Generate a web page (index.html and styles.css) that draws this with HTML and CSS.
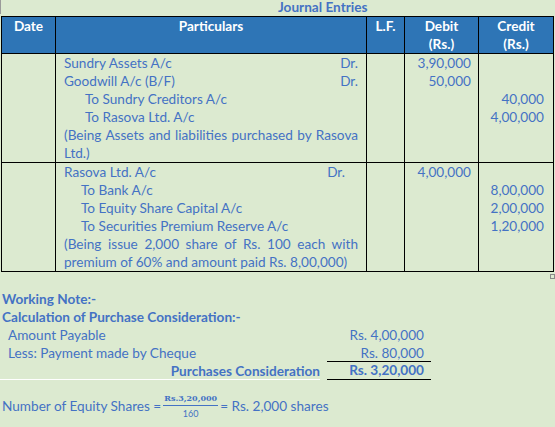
FILE: index.html
```html
<!DOCTYPE html>
<html>
<head>
<meta charset="utf-8">
<link rel="stylesheet" href="styles.css">
</head>
<body>
<div class="page">
  <div class="title-row"><span class="title">Journal Entries</span></div>
  <table class="journal">
    <colgroup>
      <col class="c-date"><col class="c-part"><col class="c-lf"><col class="c-dr"><col class="c-cr">
    </colgroup>
    <thead>
      <tr>
        <th>Date</th>
        <th>Particulars</th>
        <th>L.F.</th>
        <th>Debit<br>(Rs.)</th>
        <th>Credit<br>(Rs.)</th>
      </tr>
    </thead>
    <tbody>
      <tr>
        <td></td>
        <td class="part">
          <div class="ln dr"><span>Sundry Assets A/c</span><span>Dr.</span></div>
          <div class="ln dr"><span>Goodwill A/c (B/F)</span><span>Dr.</span></div>
          <div class="ln to1">To Sundry Creditors A/c</div>
          <div class="ln to1">To Rasova Ltd. A/c</div>
          <div class="ln just">(Being Assets and liabilities purchased by Rasova</div>
          <div class="ln">Ltd.)</div>
        </td>
        <td></td>
        <td class="amt">
          <div class="ln">3,90,000</div>
          <div class="ln">50,000</div>
        </td>
        <td class="amt cr">
          <div class="ln">&nbsp;</div>
          <div class="ln">&nbsp;</div>
          <div class="ln">40,000</div>
          <div class="ln">4,00,000</div>
        </td>
      </tr>
      <tr>
        <td></td>
        <td class="part">
          <div class="ln dr dr2"><span>Rasova Ltd. A/c</span><span>Dr.</span></div>
          <div class="ln to2">To Bank A/c</div>
          <div class="ln to2">To Equity Share Capital A/c</div>
          <div class="ln to2">To Securities Premium Reserve A/c</div>
          <div class="ln just">(Being issue 2,000 share of Rs. 100 each with</div>
          <div class="ln">premium of 60% and amount paid Rs. 8,00,000)</div>
        </td>
        <td></td>
        <td class="amt">
          <div class="ln">4,00,000</div>
        </td>
        <td class="amt cr">
          <div class="ln">&nbsp;</div>
          <div class="ln">8,00,000</div>
          <div class="ln">2,00,000</div>
          <div class="ln">1,20,000</div>
        </td>
      </tr>
    </tbody>
  </table>
  <div class="handle-row"><span class="handle"></span></div>

  <div class="notes">
    <div class="ln b">Working Note:-</div>
    <div class="ln b">Calculation of Purchase Consideration:-</div>
    <div class="calc">
      <div class="lbl ind">Amount Payable</div>
      <div class="val">Rs. 4,00,000</div>
      <div class="lbl ind">Less: Payment made by Cheque</div>
      <div class="val">Rs. 80,000</div>
      <div class="lbl total b">Purchases Consideration</div>
      <div class="val total b">Rs. 3,20,000</div>
    </div>
    <div class="eq">
      <span>Number of Equity Shares =</span>
      <span class="frac"><span class="num">Rs.3,20,000</span><span class="den">160</span></span>
      <span>= Rs. 2,000 shares</span>
    </div>
  </div>
</div>
</body>
</html>
```
FILE: styles.css
```css
html, body {
  margin: 0;
  padding: 0;
  background: #dcead0;
}
body {
  font-family: Lato, "Open Sans", sans-serif;
  font-size: 13.6px;
  color: #4472c4;
}
.page {
  width: 555px;
  height: 427px;
  overflow: hidden;
}
.title-row {
  height: 16px;
  position: relative;
  padding-left: 278px;
  box-sizing: border-box;
}
.title-row::before {
  content: "";
  position: absolute;
  left: 0;
  top: 0;
  width: 1px;
  height: 14px;
  background: #9a9a9a;
}
.title {
  font-weight: bold;
  line-height: 15px;
  display: block;
}
.journal {
  margin-left: 1px;
  border-collapse: collapse;
  table-layout: fixed;
  width: 553px;
}
.c-date { width: 54px; }
.c-part { width: 311px; }
.c-lf { width: 38px; }
.c-dr { width: 74px; }
.c-cr { width: 75px; }
.journal th, .journal td {
  border: 1px solid #000;
  padding: 0;
  vertical-align: top;
}
.journal th {
  background: #2e75b6;
  color: #fff;
  font-weight: bold;
  line-height: 18px;
  height: 35px;
  text-align: center;
  padding-top: 0;
}
.ln {
  height: 18px;
  line-height: 18px;
  white-space: nowrap;
}
.part {
  padding: 0 8px !important;
}
.dr {
  display: flex;
  justify-content: space-between;
}
.dr2 {
  padding-right: 13px;
}
.to1 { padding-left: 21px; }
.to2 { padding-left: 17px; }
.just {
  text-align: justify;
  text-align-last: justify;
  white-space: normal;
  word-spacing: -2px;
  overflow: hidden;
}
.amt {
  text-align: right;
  padding-right: 7px !important;
}
.amt.cr {
  padding-right: 9px !important;
}
.handle-row {
  display: flex;
  justify-content: flex-end;
  height: 18px;
  padding-top: 2px;
  box-sizing: border-box;
}
.handle {
  width: 3px;
  height: 3px;
  border: 1px solid #8a8a8a;
  background: #dcead0;
}
.notes {
  padding-left: 2px;
}
.b { font-weight: bold; }
.calc {
  display: grid;
  grid-template-columns: 320px 104px;
  column-gap: 7px;
  margin-left: -2px;
}
.calc > div {
  height: 18px;
  line-height: 18px;
  white-space: nowrap;
}
.ind { padding-left: 8px; }
.val {
  text-align: right;
  padding-right: 7px;
}
.lbl.total {
  text-align: right;
  border-bottom: 1px solid #fff;
  height: 17px !important;
}
.val.total {
  border-top: 1px solid #000;
  border-bottom: 1px solid #000;
  height: 17px !important;
  line-height: 17px !important;
  margin-top: -1px;
}
.eq {
  display: flex;
  align-items: center;
  margin-top: 13px;
  white-space: nowrap;
}
.frac {
  display: inline-flex;
  flex-direction: column;
  align-items: center;
  margin: 0 2px 0 2px;
  font-family: "DejaVu Serif", serif;
  font-size: 8px;
  font-weight: bold;
}
.num {
  border-bottom: 1px solid #4472c4;
  padding: 0 1px 2px;
  line-height: 10px;
}
.den {
  padding-top: 3px;
  line-height: 10px;
  font-family: Lato, sans-serif;
  font-weight: normal;
  font-size: 9px;
}
```
